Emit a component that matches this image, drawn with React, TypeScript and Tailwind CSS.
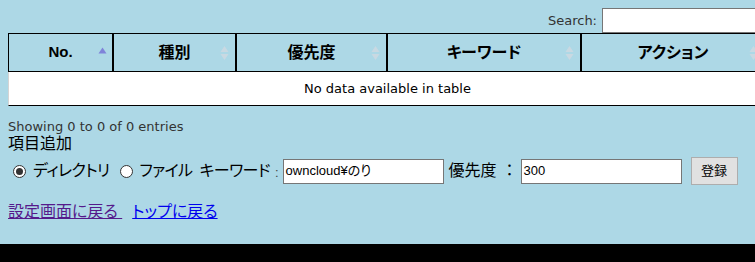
const jp = "font-['Liberation_Sans','Noto_Sans_CJK_JP',sans-serif]";
const latin = "font-['DejaVu_Sans','Noto_Sans_CJK_JP',sans-serif]";

function SortBoth() {
  return (
    <svg width="9" height="16" viewBox="0 0 9 16" className="absolute right-[6px] top-1/2 -translate-y-1/2">
      <path d="M0.5 7 L4.5 1 L8.5 7 Z" fill="#c9d9e2" />
      <path d="M0.5 9 L4.5 15 L8.5 9 Z" fill="#c9d9e2" />
    </svg>
  );
}

function SortAsc() {
  return (
    <svg width="9" height="7" viewBox="0 0 9 7" className="absolute right-[5px] top-[13px]">
      <path d="M0.5 6.5 L4.5 0.5 L8.5 6.5 Z" fill="#7f83d9" />
    </svg>
  );
}

function Radio({ checked }: { checked?: boolean }) {
  return (
    <span className="flex h-[13px] w-[13px] shrink-0 items-center justify-center rounded-full border border-[#333] bg-white">
      {checked && <span className="h-[7px] w-[7px] rounded-full bg-[#333]" />}
    </span>
  );
}

export default function App() {
  const headers = [
    { label: "No.", w: "w-[105px]", size: "text-[15px]", asc: true },
    { label: "種別", w: "w-[123px]", size: "text-[16px]" },
    { label: "優先度", w: "w-[151px]", size: "text-[16px]" },
    { label: "キーワード", w: "w-[194px]", size: "text-[16px]" },
    { label: "アクション", w: "flex-1", size: "text-[16px]" },
  ];

  return (
    <div className={`h-[262px] w-[755px] overflow-hidden bg-black ${jp}`}>
      <div className="h-[244px] bg-[#add8e6] px-2 pt-2">
        <div className="w-[758px]">
          {/* Search */}
          <div className="flex h-[25px] items-center justify-end">
            <span className={`text-[13px] text-[#333] ${latin}`}>Search:</span>
            <span className="ml-[5px] h-[25px] w-[164px] border border-[#767676] bg-white" />
          </div>

          {/* Table header */}
          <div className="flex h-[39px] border-y border-l border-black">
            {headers.map((h) => (
              <div
                key={h.label}
                className={`relative flex items-center justify-center border-r-2 border-black font-bold text-black [font-feature-settings:'palt'] ${h.w} ${h.size}`}
              >
                {h.label}
                {h.asc ? <SortAsc /> : <SortBoth />}
              </div>
            ))}
          </div>

          {/* Body */}
          <div className={`flex h-[34px] items-center justify-center border-b border-l border-b-black border-l-[#d4d4d4] bg-white text-[13px] text-black ${latin}`}>
            No data available in table
          </div>
        </div>

        <div className={`mt-[13px] text-[13px] leading-[16px] text-[#333] ${latin}`}>Showing 0 to 0 of 0 entries</div>
        <div className="text-[16px] leading-[18px] text-black">項目追加</div>

        {/* Form row */}
        <div className="mt-[4px] flex h-[28px] w-max items-center whitespace-nowrap text-[16px] text-black [font-feature-settings:'palt']">
          <span className="ml-[5px]"><Radio checked /></span>
          <span className="ml-[7px] tracking-[-0.6px]">ディレクトリ</span>
          <span className="ml-[10px]"><Radio /></span>
          <span className="ml-[7px] tracking-[-0.6px]">ファイル</span>
          <span className="ml-[7px] tracking-[-0.6px]">キーワード</span>
          <span className="ml-[5px] mt-[4px] text-[13px] text-[#444]">:</span>
          <span className="ml-[4px] flex h-[25px] w-[161px] shrink-0 items-center border border-[#767676] bg-white px-[2px] text-[13px]">
            owncloud¥のり
          </span>
          <span className="ml-[5px] [font-feature-settings:normal]">優先度</span>
          <span className="ml-[5px] [font-feature-settings:normal]">：</span>
          <span className="ml-[3px] flex h-[25px] w-[161px] shrink-0 items-center border border-[#767676] bg-white px-[2px] text-[13px]">
            300
          </span>
          <span className="ml-[9px] flex h-[28px] w-[47px] shrink-0 items-center justify-center border border-[#adadad] bg-[#e1e1e1] text-[13px]">
            登録
          </span>
        </div>

        {/* Links */}
        <div className="mt-[17px] flex text-[16px] leading-[20px] [font-feature-settings:'palt']">
          <a href="#settings" className="text-[#551a8b] underline">
            設定画面に戻る&nbsp;
          </a>
          <a href="#top" className="ml-[10px] text-[#0000ee] underline">
            トップに戻る
          </a>
        </div>
      </div>
    </div>
  );
}
